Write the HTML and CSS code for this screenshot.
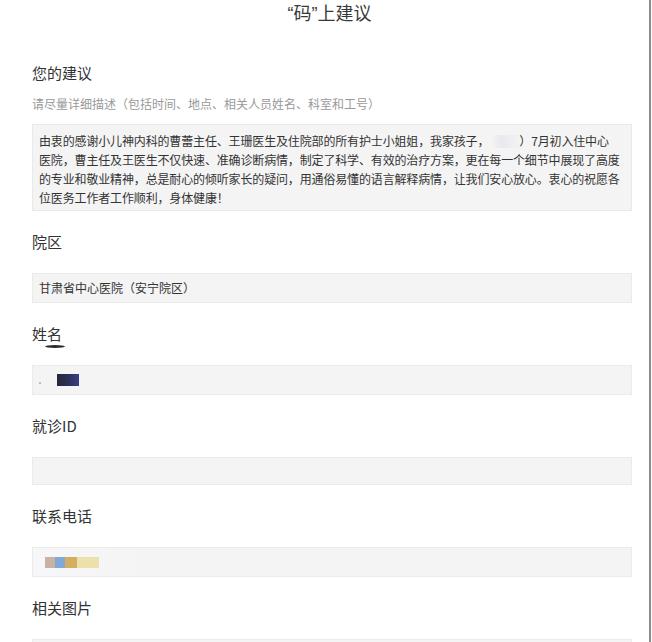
FILE: index.html
```html
<!DOCTYPE html>
<html lang="zh-CN">
<head>
<meta charset="utf-8">
<title>“码”上建议</title>
<link rel="stylesheet" href="styles.css">
</head>
<body>
<div class="page">
  <h1 class="title">“码”上建议</h1>
  <div class="form">
    <div class="label first">您的建议</div>
    <div class="hint">请尽量详细描述（包括时间、地点、相关人员姓名、科室和工号）</div>
    <div class="textarea">由衷的感谢小儿神内科的曹蕾主任、王珊医生及住院部的所有护士小姐姐，我家孩子<span class="comma">，</span><span class="blur-light"></span>）7月初入住中心<br>医院，曹主任及王医生不仅快速、准确诊断病情，制定了科学、有效的治疗方案，更在每一个细节中展现了高度<br>的专业和敬业精神，总是耐心的倾听家长的疑问，用通俗易懂的语言解释病情，让我们安心放心。衷心的祝愿各<br>位医务工作者工作顺利，身体健康！</div>

    <div class="label">院区</div>
    <div class="input">甘肃省中心医院（安宁院区）</div>

    <div class="label"><span class="smudge">姓名</span></div>
    <div class="input"><span class="dot"></span><span class="blur-name"></span></div>

    <div class="label">就诊ID</div>
    <div class="input short"></div>

    <div class="label">联系电话</div>
    <div class="input phone"><span class="blur-phone"><span class="c1"></span><span class="c2"></span><span class="c3"></span><span class="c4"></span></span></div>

    <div class="label">相关图片</div>
    <div class="input"></div>
  </div>
</div>
</body>
</html>
```

FILE: styles.css
```css
* { box-sizing: border-box; }
html, body { margin: 0; padding: 0; background: #fff; }
body {
  font-family: "Noto Sans CJK SC", "Noto Sans", sans-serif;
  color: #333;
  overflow: hidden;
}
.page {
  width: 651px;
  height: 642px;
  border-right: 2px solid #8c8c8c;
  background: #fff;
}
.title {
  margin: 0;
  height: 28px;
  line-height: 28px;
  font-family: "Liberation Sans", "Noto Sans CJK SC", sans-serif;
  font-size: 18px;
  font-weight: normal;
  text-align: center;
  color: #3a3a3a;
  padding-left: 10px;
}
.form {
  padding: 0 17px 0 32px;
}
.label {
  height: 62px;
  line-height: 62px;
  font-size: 15px;
  color: #333;
}
.label.first {
  height: 20px;
  line-height: 20px;
  margin-top: 35px;
}
.hint {
  margin-top: 13px;
  line-height: 16px;
  font-size: 12px;
  color: #999;
}
.textarea {
  margin-top: 12px;
  background: #f4f4f4;
  border: 1px solid #e9e9e9;
  padding: 6px 0 3px 6px;
  font-size: 12px;
  letter-spacing: -0.15px;
  line-height: 19px;
  color: #333;
  white-space: nowrap;
}
.comma { color: #333; }
.blur-light {
  display: inline-block;
  width: 30px;
  height: 13px;
  vertical-align: -2px;
  background: linear-gradient(90deg, #f7f7f7, #e9e9ee 40%, #f2f2f2);
  border-radius: 2px;
}
.input {
  height: 30px;
  background: #f4f4f4;
  border: 1px solid #ebebeb;
  padding-left: 6px;
  font-size: 12px;
  line-height: 28px;
  color: #333;
  display: flex;
  align-items: center;
}
.input.short { height: 28px; }
.smudge { position: relative; }
.smudge::after {
  content: "";
  position: absolute;
  left: 13px;
  top: 22px;
  width: 20px;
  height: 3px;
  border-radius: 50%;
  background: #2b2b2b;
}
.dot {
  width: 2px;
  height: 2px;
  background: #bbb;
  margin-right: 16px;
  margin-top: 6px;
}
.blur-name {
  width: 22px;
  height: 12px;
  background: linear-gradient(90deg, #26263a, #2d2f55 50%, #3a3f86);
}
.phone {
  background: linear-gradient(90deg, #f7f7f9 0, #f4f4f4 120px);
}
.blur-phone {
  display: flex;
  margin-left: 6px;
  height: 11px;
}
.blur-phone span { display: block; height: 11px; }
.c1 { width: 10px; background: #c9b2a2; }
.c2 { width: 10px; background: #7fa9d6; }
.c3 { width: 12px; background: #d5ad63; }
.c4 { width: 22px; background: #ede0ab; }
```
